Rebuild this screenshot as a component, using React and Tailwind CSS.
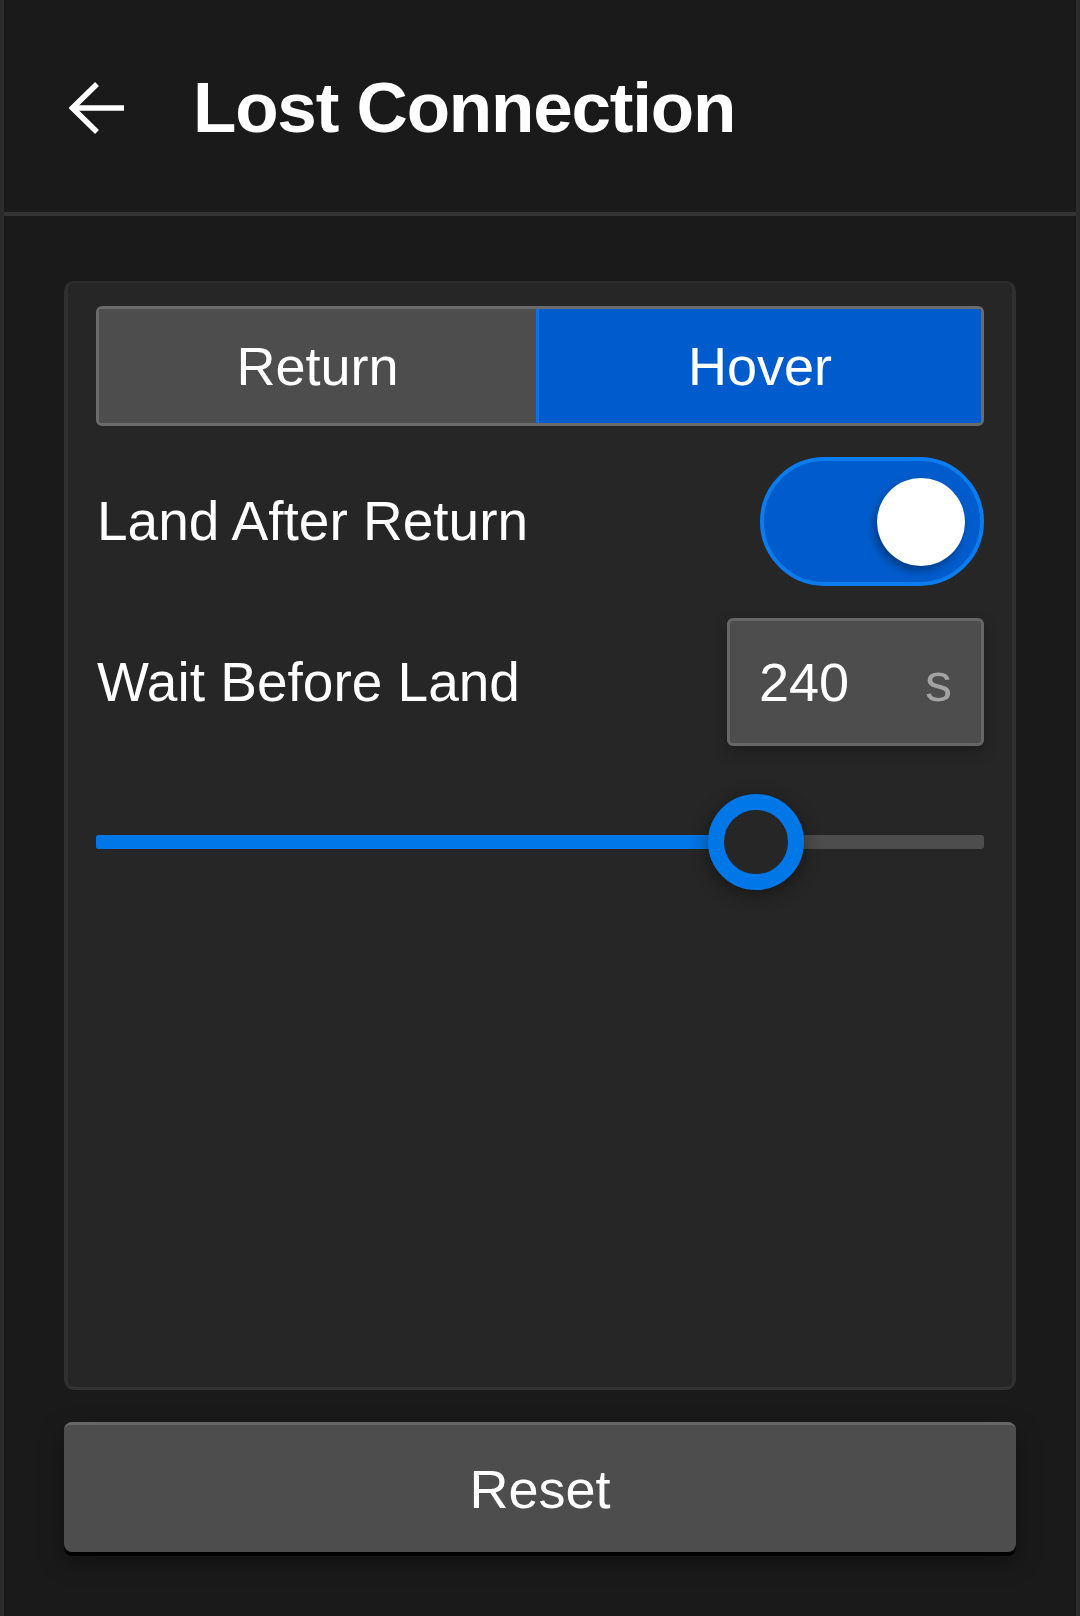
import React from "react";

const font = { fontFamily: '"Liberation Sans", Arial, sans-serif' };

function BackArrow() {
  return (
    <svg width="56" height="52" viewBox="0 0 56 52" fill="none" className="block">
      <path d="M28 2 L3.5 26 L28 50" stroke="#ffffff" strokeWidth="5.5" strokeLinecap="butt" strokeLinejoin="miter" />
      <path d="M4 26 H55" stroke="#ffffff" strokeWidth="5.5" />
    </svg>
  );
}

export default function App() {
  return (
    <div
      className="w-[1080px] h-[1616px] bg-[#1a1a1a] border-x-4 border-[#2b2b2b] flex flex-col text-white"
      style={font}
    >
      {/* Header */}
      <div className="h-[212px] flex items-center pl-[65px] pt-[3px] shrink-0">
        <BackArrow />
        <h1 className="ml-[68px] text-[71px] leading-none font-bold tracking-[-1.2px]">
          Lost Connection
        </h1>
      </div>
      <div className="h-[4px] bg-[#333333] shrink-0" />

      {/* Content */}
      <div className="flex-1 flex flex-col px-[60px] pt-[65px] pb-[64px]">
        <div className="h-[1109px] bg-[#262626] rounded-[10px] border-x-4 border-b-[3px] border-t-2 border-x-[#303030] border-b-[#333333] border-t-[#2d2d2d] px-[28px] pt-[23px] flex flex-col">
          {/* Segmented */}
          <div className="h-[120px] flex rounded-[6px] border-[3px] border-[#6b6b6b] overflow-hidden">
            <div className="w-[437px] bg-[#4d4d4d] flex items-center justify-center text-[54px] leading-none">
              Return
            </div>
            <div className="flex-1 bg-[#005ccc] border-l-[3px] border-[#0a72e6] flex items-center justify-center text-[54px] leading-none">
              Hover
            </div>
          </div>

          {/* Toggle row */}
          <div className="mt-[31px] flex items-center justify-between">
            <span className="text-[55px] leading-none pl-px">Land After Return</span>
            <div className="w-[224px] h-[129px] rounded-full bg-[#005ccc] border-[4px] border-[#0a7cee] flex items-center justify-end pr-[15px]">
              <div className="w-[88px] h-[88px] rounded-full bg-white shadow-[-3px_5px_8px_rgba(0,0,0,0.35)]" />
            </div>
          </div>

          {/* Wait row */}
          <div className="mt-[32px] flex items-center justify-between">
            <span className="text-[55px] leading-none pl-px">Wait Before Land</span>
            <div className="w-[257px] h-[128px] rounded-[6px] bg-[#4d4d4d] border-[3px] border-[#666666] flex items-center justify-between pl-[29px] pr-[29px] shadow-[0_6px_14px_rgba(0,0,0,0.25)]">
              <span className="text-[54px] leading-none">240</span>
              <span className="text-[54px] leading-none text-[#a3a3a3]">s</span>
            </div>
          </div>

          {/* Slider */}
          <div className="mt-[48px] h-[96px] relative flex items-center">
            <div className="w-full h-[14px] rounded-[3px] bg-[#4d4d4d] overflow-hidden">
              <div className="w-[74.5%] h-full bg-[#0077e6]" />
            </div>
            <div className="absolute left-[612px] top-0 w-[96px] h-[96px] rounded-full border-[16px] border-[#0077e6] bg-[#262626] shadow-[0_4px_18px_rgba(0,0,0,0.45)]" />
          </div>
        </div>

        {/* Reset */}
        <button className="mt-[32px] h-[130px] w-full rounded-[8px] bg-[#4d4d4d] border-t-[3px] border-[#666666] text-[54px] leading-none text-white shadow-[0_4px_0_#000000,0_10px_24px_rgba(0,0,0,0.35)] flex items-center justify-center">
          Reset
        </button>
      </div>
    </div>
  );
}
